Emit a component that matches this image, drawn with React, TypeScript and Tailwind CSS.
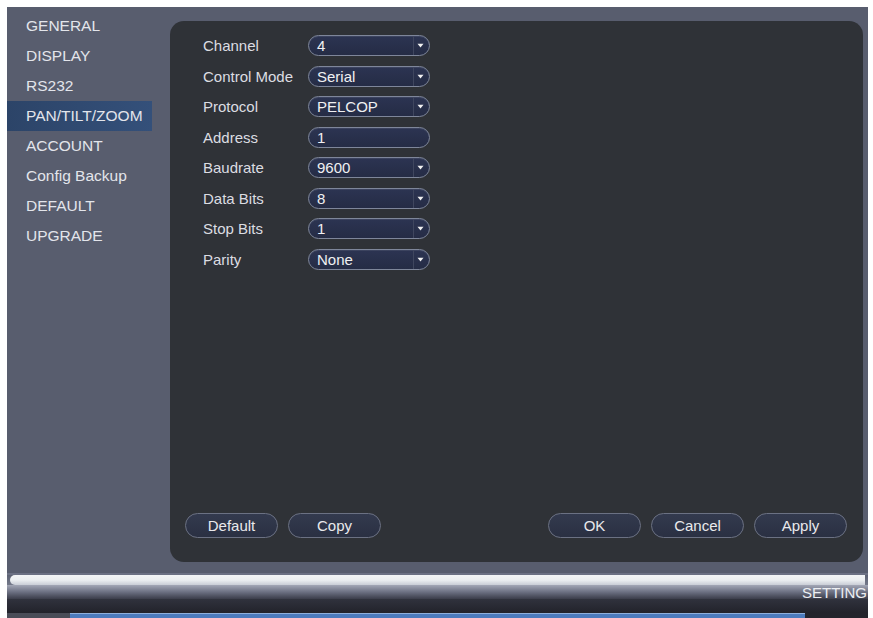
const menu = [
  'GENERAL',
  'DISPLAY',
  'RS232',
  'PAN/TILT/ZOOM',
  'ACCOUNT',
  'Config Backup',
  'DEFAULT',
  'UPGRADE',
];

type Field = { label: string; value: string; select: boolean };

const fields: Field[] = [
  { label: 'Channel', value: '4', select: true },
  { label: 'Control Mode', value: 'Serial', select: true },
  { label: 'Protocol', value: 'PELCOP', select: true },
  { label: 'Address', value: '1', select: false },
  { label: 'Baudrate', value: '9600', select: true },
  { label: 'Data Bits', value: '8', select: true },
  { label: 'Stop Bits', value: '1', select: true },
  { label: 'Parity', value: 'None', select: true },
];

const Caret = () => (
  <svg width="7" height="5" viewBox="0 0 7 5" className="shrink-0">
    <path d="M0.5 0.8 L6.5 0.8 L3.5 4.4 Z" fill="#f2f2f2" />
  </svg>
);

const Input = ({ value, select }: { value: string; select: boolean }) => (
  <div className="flex h-[21px] w-[122px] items-center rounded-full border-[1.5px] border-[#7e869a] bg-gradient-to-b from-[#2c3452] to-[#252c45] pl-[8px] shadow-[inset_0_1px_0_rgba(255,255,255,0.08)]">
    <span className="flex-1 text-[15px] leading-none text-[#f0f0f2]">{value}</span>
    {select && (
      <div className="flex h-full w-[16px] items-center justify-center border-l border-[#3f465e] pr-[2px]">
        <Caret />
      </div>
    )}
  </div>
);

const Button = ({ label }: { label: string }) => (
  <button className="flex h-[25px] w-[93px] items-center justify-center rounded-full border-[1.5px] border-[#6b7183] bg-gradient-to-b from-[#333a4e] to-[#2a3042] text-[15px] leading-none text-[#e9e9ec]">
    {label}
  </button>
);

export default function App() {
  return (
    <div
      className="flex h-[618px] w-[873px] flex-col overflow-hidden bg-white pl-[7px] pr-[5px] pt-[7px]"
      style={{ fontFamily: '"Liberation Sans", Arial, sans-serif' }}
    >
      {/* main frame */}
      <div className="flex h-[566px] shrink-0 bg-[#585d6e]">
        {/* side menu */}
        <nav className="flex w-[163px] shrink-0 flex-col pt-[4px]">
          {menu.map((item) => (
            <div
              key={item}
              className={`flex h-[30px] w-[145px] items-center pl-[19px] text-[15.5px] leading-none text-[#e3e5eb] ${
                item === 'PAN/TILT/ZOOM' ? 'bg-gradient-to-r from-[#2c4468] to-[#34507a]' : ''
              }`}
            >
              {item}
            </div>
          ))}
        </nav>

        {/* settings panel */}
        <section className="mb-[11px] mr-[5px] mt-[14px] flex flex-1 flex-col justify-between rounded-[14px] bg-[#2f3237] pb-[24px] pl-[15px] pr-[16px] pt-[14px]">
          <div className="flex flex-col gap-[9.5px] pl-[18px]">
            {fields.map((f) => (
              <div key={f.label} className="flex h-[21px] items-center">
                <span className="w-[105px] text-[15px] leading-none text-[#dcdde2]">{f.label}</span>
                <Input value={f.value} select={f.select} />
              </div>
            ))}
          </div>

          <div className="flex items-center">
            <div className="flex gap-[10px]">
              <Button label="Default" />
              <Button label="Copy" />
            </div>
            <div className="ml-auto flex gap-[10px]">
              <Button label="OK" />
              <Button label="Cancel" />
              <Button label="Apply" />
            </div>
          </div>
        </section>
      </div>

      {/* status bar */}
      <div className="relative flex h-[45px] shrink-0 flex-col overflow-hidden bg-gradient-to-b from-[#585d6e] via-[#8d92a3] to-[#23242c]">
        <div className="h-[2px] bg-[#6c7184]" />
        <div className="ml-[3px] mr-[3px] h-[10px] rounded-l-full bg-gradient-to-b from-[#f4f6f7] via-[#eceff1] to-[#c9cdd6]" />
        <div className="flex h-[14px] items-center bg-gradient-to-b from-[#a3a7b6] via-[#6c7082] to-[#3b3d4a] pl-[795px]">
          <span className="whitespace-nowrap text-[15px] leading-none text-[#eceef2]">SETTING</span>
        </div>
        <div className="h-[14px] bg-gradient-to-b from-[#30323d] to-[#22232b]" />
        <div className="flex h-[5px]">
          <div className="w-[63px] bg-[#4a4d58]" />
          <div className="w-[735px] border-t border-[#8fb0dc] bg-[#4c7bbd]" />
          <div className="flex-1 bg-[#23242c]" />
        </div>
      </div>
    </div>
  );
}
